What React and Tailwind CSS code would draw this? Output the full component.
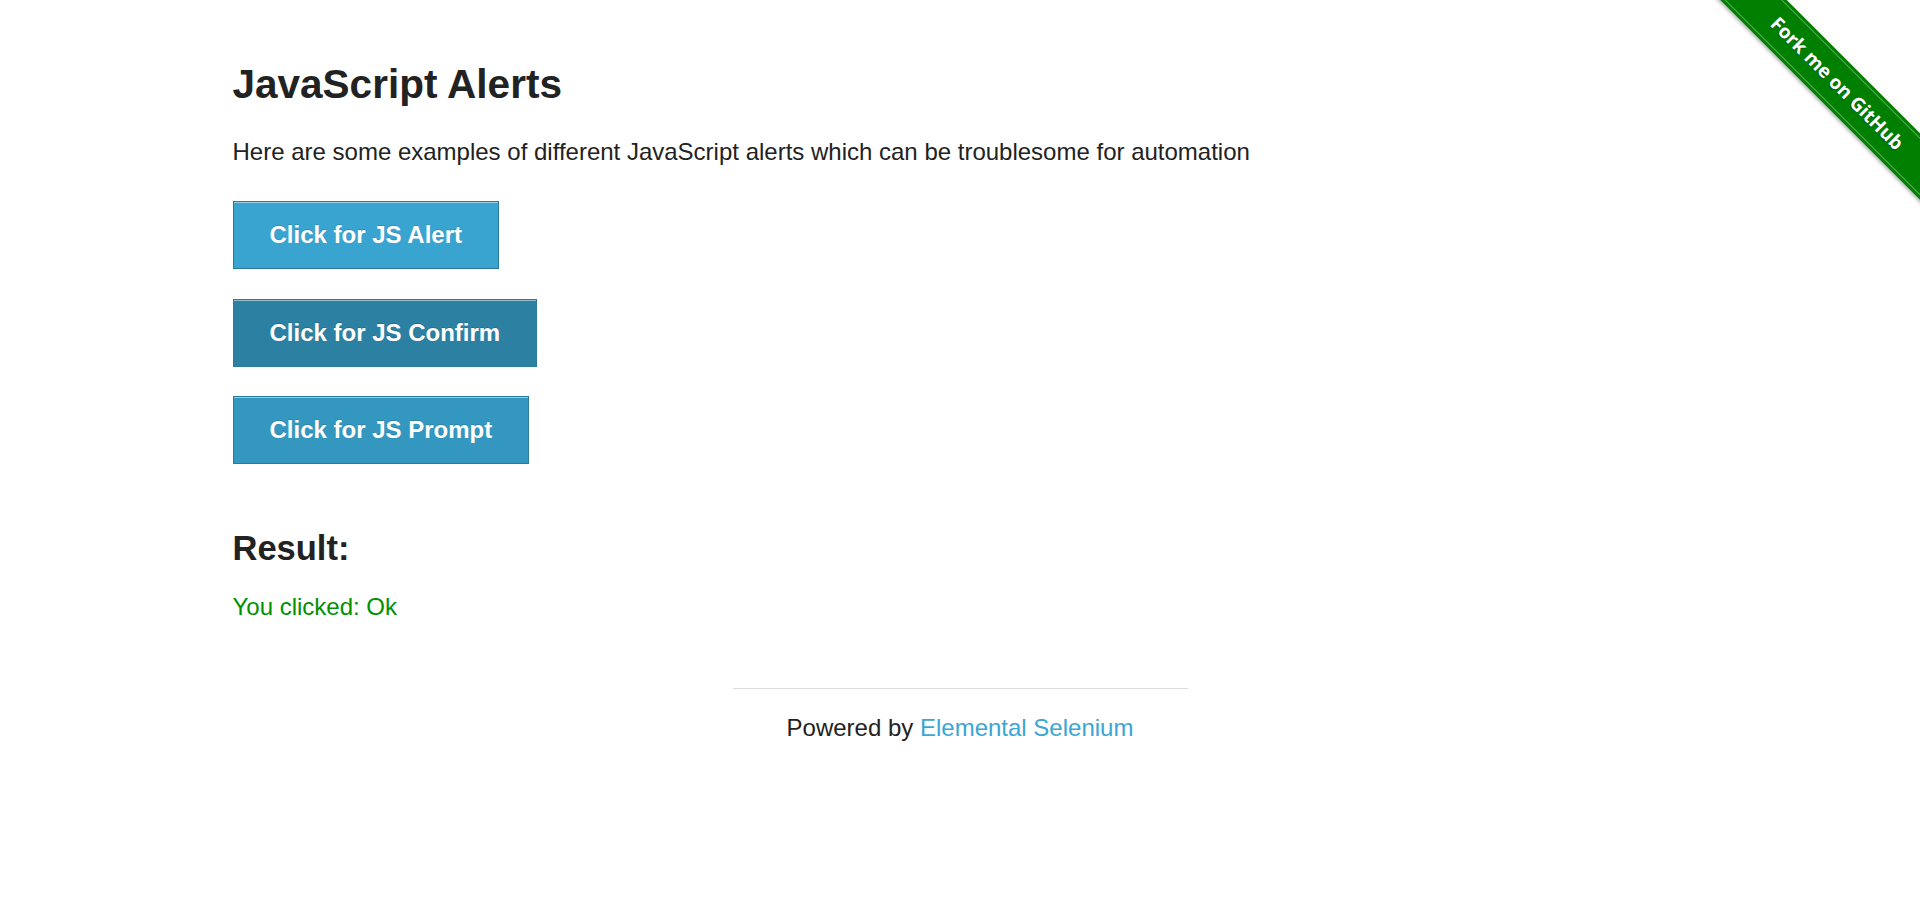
import React from "react";

const buttons = [
  { label: "Click for JS Alert", bg: "bg-[#3aa4d0]", mt: "mt-[34px]" },
  { label: "Click for JS Confirm", bg: "bg-[#2c81a3]", mt: "mt-[30px]" },
  { label: "Click for JS Prompt", bg: "bg-[#3497bf]", mt: "mt-[29px]" },
];

function ForkRibbon() {
  return (
    <div className="absolute top-0 right-0 w-[223px] h-[223px] overflow-hidden pointer-events-none">
      <div className="absolute left-[-20px] top-[60px] w-[320px] h-[47px] rotate-45 bg-[#007f00] shadow-[0_2px_4px_rgba(0,0,0,0.3)] flex items-center">
        <div className="w-full h-[41px] border-y border-[rgba(255,255,255,0.35)] flex items-center justify-center">
          <span className="text-white text-[19px] font-bold font-['Open_Sans',sans-serif] [text-shadow:0_1px_1px_rgba(0,0,0,0.4)]">
            Fork me on GitHub
          </span>
        </div>
      </div>
    </div>
  );
}

export default function App() {
  return (
    <div className="relative min-h-[920px] bg-white text-[#222222] font-['Liberation_Sans',Arial,sans-serif] overflow-hidden">
      <ForkRibbon />
      <div className="max-w-[1500px] mx-auto px-[22.5px]">
        <h3 className="mt-[60px] text-[40.5px] leading-[48px] font-bold">JavaScript Alerts</h3>
        <p className="mt-[29px] text-[24px] leading-[30px]">
          Here are some examples of different JavaScript alerts which can be troublesome for automation
        </p>
        <ul className="flex flex-col items-start">
          {buttons.map((b) => (
            <li key={b.label} className={b.mt}>
              <button
                className={
                  b.bg +
                  " h-[68px] px-[36px] border border-[#2a7a9c] shadow-[inset_0_1px_0_rgba(255,255,255,0.5)] text-white text-[24px] leading-[30px] font-bold [text-shadow:0_-1px_0_rgba(0,0,0,0.15)]"
                }
              >
                {b.label}
              </button>
            </li>
          ))}
        </ul>
        <h4 className="mt-[64px] text-[34.5px] leading-[40px] font-bold">Result:</h4>
        <p className="mt-[24px] text-[24px] leading-[30px] text-[#009000]">You clicked: Ok</p>
      </div>
      <div className="w-[455px] mx-auto mt-[66px]">
        <hr className="border-0 border-t border-[#dddddd]" />
        <div className="mt-[24px] text-center text-[24px] leading-[30px]">
          Powered by <a className="text-[#3aa6d3]">Elemental Selenium</a>
        </div>
      </div>
    </div>
  );
}
